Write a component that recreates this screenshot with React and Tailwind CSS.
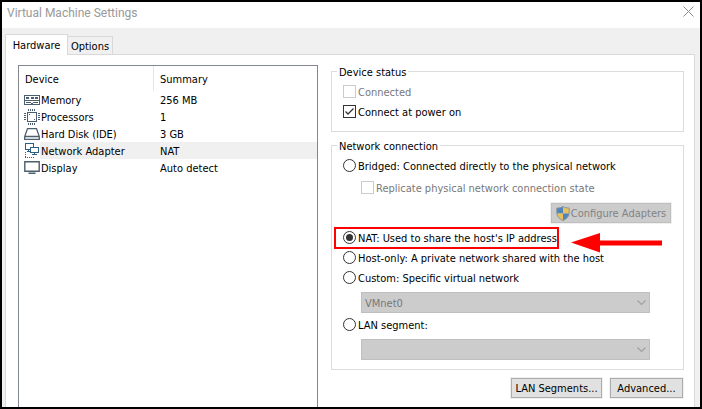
import React from "react";

function MemoryIcon() {
  return (
    <svg width="16" height="16" viewBox="0 0 16 16" fill="none" stroke="#4b5f6e" shapeRendering="crispEdges">
      <path d="M0.5 3.5H15.5V12.5H0.5Z M1 8.5H15" />
      <path d="M2 5h3v2h-3zM6.5 5h3v2h-3zM11 5h3v2h-3z" fill="#4b5f6e" stroke="none" />
      <path d="M2 10.5H7M9 10.5H14" />
      <path d="M7 11h2v2h-2z" fill="#4b5f6e" stroke="none" />
    </svg>
  );
}

function CpuIcon() {
  return (
    <svg width="16" height="16" viewBox="0 0 16 16" fill="none" stroke="#4b5f6e" shapeRendering="crispEdges">
      <path d="M3.5 3.5H12.5V12.5H3.5Z" />
      <path d="M4.5 0v2M6.5 0v2M8.5 0v2M10.5 0v2M4.5 14v2M6.5 14v2M8.5 14v2M10.5 14v2M0 4.5h2M0 6.5h2M0 8.5h2M0 10.5h2M14 4.5h2M14 6.5h2M14 8.5h2M14 10.5h2" />
      <path d="M5 5h1v1h-1zM10 10h1v1h-1z" fill="#4b5f6e" stroke="none" />
    </svg>
  );
}

function DiskIcon() {
  return (
    <svg width="16" height="16" viewBox="0 0 16 16" fill="none" stroke="#4b5f6e" strokeWidth="1.3">
      <path d="M3.5 2.6H12.5L15.3 10.5V13.4H0.7V10.5Z M0.7 10.5H15.3" />
    </svg>
  );
}

function NetworkIcon() {
  return (
    <svg width="16" height="16" viewBox="0 0 16 16" fill="none" stroke="#2d5f85" shapeRendering="crispEdges">
      <path d="M6 6.5H1.5V0.5H9.5V4 M4.5 7V8.5M3 8.5H6" />
      <path d="M6.5 4.5H14.5V9.5H6.5Z M10.5 10V12 M8 11.5H13" />
      <path d="M1.5 9v5M1 14.5h10" strokeDasharray="1 1" />
    </svg>
  );
}

function DisplayIcon() {
  return (
    <svg width="16" height="16" viewBox="0 0 16 16" fill="none" stroke="#4b5f6e" strokeWidth="1.4">
      <path d="M0.8 1.8H15.2V11.2H0.8Z M4.5 13.3H11.5" />
    </svg>
  );
}

function ShieldIcon() {
  return (
    <svg width="14" height="15" viewBox="0 0 14 15">
      <path d="M7 0.5C5 1.8 3 2 0.8 2V7.5H7Z" fill="#4d86bd" />
      <path d="M7 0.5C9 1.8 11 2 13.2 2V7.5H7Z" fill="#e9c15c" />
      <path d="M0.8 7.5C1.2 11 4 13.2 7 14.5V7.5Z" fill="#e9c15c" />
      <path d="M13.2 7.5C12.8 11 10 13.2 7 14.5V7.5Z" fill="#4d86bd" />
      <path d="M7 0.5C5 1.8 3 2 0.8 2V7C1 11 4 13.2 7 14.5C10 13.2 13 11 13.2 7V2C11 2 9 1.8 7 0.5Z" fill="none" stroke="#8c949c" />
    </svg>
  );
}

const devices = [
  { name: "Memory", summary: "256 MB", Icon: MemoryIcon },
  { name: "Processors", summary: "1", Icon: CpuIcon },
  { name: "Hard Disk (IDE)", summary: "3 GB", Icon: DiskIcon },
  { name: "Network Adapter", summary: "NAT", Icon: NetworkIcon, selected: true },
  { name: "Display", summary: "Auto detect", Icon: DisplayIcon },
];

function DeviceList() {
  return (
    <div className="w-[300px] shrink-0 border border-b-0 border-[#828790]">
      <table className="w-full table-fixed border-separate border-spacing-0 text-left">
        <colgroup>
          <col className="w-[21px]" />
          <col className="w-[114px]" />
          <col />
        </colgroup>
        <thead>
          <tr className="h-[25px]">
            <th colSpan={2} className="border-r border-[#e5e5e5] p-0 pt-[2px] pl-[6px] font-normal">Device</th>
            <th className="p-0 pt-[2px] pl-[6px] font-normal">Summary</th>
          </tr>
        </thead>
        <tbody>
          {devices.map(({ name, summary, Icon, selected }) => (
            <tr key={name} className="h-[17px]">
              <td className="p-0 pl-[5px]"><Icon /></td>
              <td className={selected ? "bg-[#f0f0f0] p-0 pt-[2px] pl-px" : "p-0 pt-[2px] pl-px"}>{name}</td>
              <td className={selected ? "bg-[#f0f0f0] p-0 pt-[2px] pl-[6px]" : "p-0 pt-[2px] pl-[6px]"}>{summary}</td>
            </tr>
          ))}
        </tbody>
      </table>
    </div>
  );
}

function Check({ label, checked, disabled }) {
  return (
    <label className={disabled ? "flex h-5 items-center gap-[2px] pb-px text-[#787878]" : "flex h-5 items-center gap-[2px] pb-px"}>
      <span className="grid shrink-0">
        <input
          type="checkbox"
          defaultChecked={checked}
          disabled={disabled}
          className="peer col-start-1 row-start-1 size-[13px] appearance-none border border-[#333] bg-white disabled:border-[#ccc]"
        />
        <svg width="13" height="13" viewBox="0 0 13 13" fill="none" stroke="#333" strokeWidth="1.3" className="pointer-events-none invisible col-start-1 row-start-1 peer-checked:visible">
          <path d="M2.5 6.5L5 9L10.5 3.5" />
        </svg>
      </span>
      <span className="pt-[2px]">{label}</span>
    </label>
  );
}

function Radio({ label, checked, children }) {
  return (
    <div className="relative flex h-5 items-center pb-px">
      <label className="flex items-center gap-[2px] whitespace-nowrap">
        <span className="grid shrink-0 place-items-center">
          <input
            type="radio"
            name="connection"
            defaultChecked={checked}
            className="peer col-start-1 row-start-1 size-[13px] appearance-none rounded-full border border-[#333] bg-white"
          />
          <span className="pointer-events-none invisible col-start-1 row-start-1 size-[7px] rounded-full bg-[#333] peer-checked:visible" />
        </span>
        <span className="pt-[2px]">{label}</span>
      </label>
      {children}
    </div>
  );
}

function Dropdown({ label, value }) {
  return (
    <div className="mt-1 mr-[33px] ml-[18px] grid">
      <select
        aria-label={label}
        disabled
        defaultValue={value}
        className="col-start-1 row-start-1 h-[21px] w-full appearance-none border border-[#bfbfbf] bg-[#ccc] pt-px pl-[3px] text-[#787878] opacity-100"
      >
        <option>{value}</option>
      </select>
      <svg width="9" height="6" viewBox="0 0 9 6" fill="none" stroke="#a0a0a0" strokeWidth="1.2" className="pointer-events-none col-start-1 row-start-1 mr-[4px] self-center justify-self-end">
        <path d="M0.5 0.5L4.5 4.5L8.5 0.5" />
      </svg>
    </div>
  );
}

function Callout() {
  return (
    <>
      <span className="pointer-events-none absolute -top-px left-[-9px] h-[22px] w-[225px] border-2 border-[#fe0000]" />
      <svg width="91" height="20" viewBox="0 0 91 20" fill="#fe0000" className="pointer-events-none absolute top-[5px] left-[228px]">
        <path d="M0 9.5L29 0V7.5H91V12.5H29V19.5Z" />
      </svg>
    </>
  );
}

const legend = "-ml-[6px] px-[2px] pt-[2px] leading-[13px]";
const button = "h-5 border border-[#adadad] bg-[#e1e1e1] text-center whitespace-nowrap outline outline-[#f0f0f0]";

export default function App() {
  return (
    <main className="flex min-h-screen flex-col border-2 border-black bg-[#f0f0f0] font-['DejaVu_Sans_Condensed','DejaVu_Sans',sans-serif] text-[11px] leading-[15px] text-black">
      <header className="flex h-[26px] items-start justify-between bg-white pr-[6px] pl-[5px]">
        <h1 className="pt-[3px] font-[Roboto,sans-serif] text-[12px] leading-4 text-[#999]">Virtual Machine Settings</h1>
        <button type="button" aria-label="Close" className="mt-[4px]">
          <svg width="11" height="11" viewBox="0 0 11 11" stroke="#8a8a8a" fill="none">
            <path d="M0.5 0.5L10.5 10.5M10.5 0.5L0.5 10.5" />
          </svg>
        </button>
      </header>
      <div className="flex flex-1 flex-col pt-[6px] pr-[5px] pl-[3px]">
        <div role="tablist" className="flex items-end">
          <button type="button" role="tab" aria-selected="true" className="z-10 -mb-px h-[21px] w-[63px] border border-b-0 border-[#d9d9d9] bg-white">Hardware</button>
          <button type="button" role="tab" aria-selected="false" className="h-[18px] w-[45px] border border-b-0 border-l-0 border-[#d9d9d9] bg-[#f0f0f0] pt-px">Options</button>
        </div>
        <div role="tabpanel" className="flex flex-1 border border-b-0 border-[#d9d9d9] bg-white pr-[10px] pl-3">
          <div className="mt-[10px] mr-[13px] flex">
            <DeviceList />
          </div>
          <div className="min-w-0 flex-1 pt-[9px] pb-[9px]">
            <fieldset className="border border-[#dcdcdc] pt-[3px] pb-[9px] pl-[11px]">
              <legend className={legend}>Device status</legend>
              <Check label="Connected" disabled />
              <Check label="Connect at power on" checked />
            </fieldset>
            <fieldset className="mt-[6px] border border-[#dcdcdc] pt-[3px] pb-[9px] pl-[11px]">
              <legend className={legend}>Network connection</legend>
              <Radio label="Bridged: Connected directly to the physical network" />
              <div className="mt-[2px] ml-[18px]">
                <Check label="Replicate physical network connection state" disabled />
              </div>
              <div className="mt-[5px] mr-3 mb-[5px] flex justify-end">
                <button type="button" disabled className="flex h-5 w-[120px] items-center justify-center gap-px border border-[#bfbfbf] bg-[#ccc] whitespace-nowrap text-[#838383] outline outline-[#f0f0f0]">
                  <ShieldIcon />
                  Configure Adapters
                </button>
              </div>
              <Radio label="NAT: Used to share the host's IP address" checked>
                <Callout />
              </Radio>
              <Radio label="Host-only: A private network shared with the host" />
              <Radio label="Custom: Specific virtual network" />
              <Dropdown label="Virtual network" value="VMnet0" />
              <div className="mt-[2px]">
                <Radio label="LAN segment:" />
              </div>
              <Dropdown label="LAN segment name" value="" />
            </fieldset>
            <div className="mt-2 flex justify-end gap-2 pr-px">
              <button type="button" className={`${button} w-[91px]`}>LAN Segments...</button>
              <button type="button" className={`${button} w-[73px]`}>Advanced...</button>
            </div>
          </div>
        </div>
      </div>
    </main>
  );
}
